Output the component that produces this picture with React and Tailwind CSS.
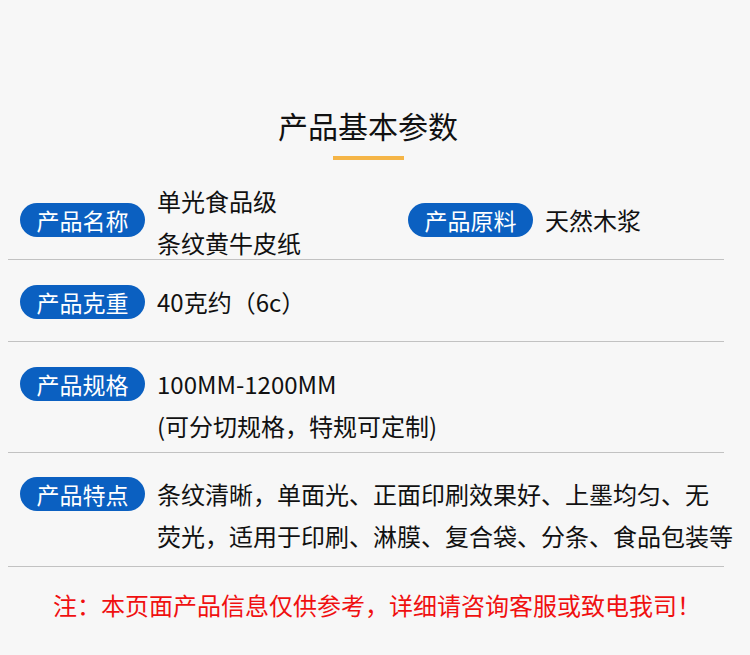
const font = { fontFamily: '"Noto Sans CJK SC", "Noto Sans", sans-serif' }

function Pill({ children, className = '' }) {
  return (
    <span
      className={`flex h-[34px] w-[125px] shrink-0 items-center justify-center rounded-full bg-[#0b60c1] text-[23px] leading-none text-white ${className}`}
    >
      {children}
    </span>
  )
}

function Divider() {
  return <div className="ml-[8px] h-px w-[716px] bg-[#c2c2c2]" />
}

export default function App() {
  return (
    <div className="h-[655px] w-[750px] bg-[#f7f7f7] text-[#111]" style={font}>
      <div className="flex w-[736px] flex-col items-center pt-[105px]">
        <h1 className="text-[30px] leading-[40px] font-normal">产品基本参数</h1>
        <div className="mt-[11px] h-[4px] w-[71px] bg-[#f5b547]" />
      </div>

      {/* 名称 / 原料 */}
      <div className="mt-[20px] flex h-[79px]">
        <div className="flex w-[408px] items-start pl-[20px]">
          <Pill className="mt-[23px]">产品名称</Pill>
          <div className="ml-[12px] text-[24px] leading-[42px]">
            <div>单光食品级</div>
            <div>条纹黄牛皮纸</div>
          </div>
        </div>
        <div className="flex items-start">
          <Pill className="mt-[23px]">产品原料</Pill>
          <div className="ml-[12px] mt-[19px] text-[24px] leading-[42px]">天然木浆</div>
        </div>
      </div>
      <Divider />

      {/* 克重 */}
      <div className="flex items-start pl-[20px] pt-[21px] pb-[18px]">
        <Pill className="mt-[4px]">产品克重</Pill>
        <div className="ml-[12px] text-[24px] leading-[42px]">40克约（6c）</div>
      </div>
      <Divider />

      {/* 规格 */}
      <div className="flex items-start pl-[20px] pt-[21px] pb-[5px]">
        <Pill className="mt-[4px]">产品规格</Pill>
        <div className="ml-[12px] text-[24px] leading-[42px]">
          <div>100MM-1200MM</div>
          <div>(可分切规格，特规可定制)</div>
        </div>
      </div>
      <Divider />

      {/* 特点 */}
      <div className="flex items-start pl-[20px] pt-[20px] pb-[9px]">
        <Pill className="mt-[4px]">产品特点</Pill>
        <div className="ml-[12px] text-[24px] leading-[42px]">
          <div>条纹清晰，单面光、正面印刷效果好、上墨均匀、无</div>
          <div className="whitespace-nowrap">荧光，适用于印刷、淋膜、复合袋、分条、食品包装等</div>
        </div>
      </div>
      <Divider />

      <p className="mt-[22px] pl-[53px] text-[24px] leading-[32px] text-[#f01010]">
        注：本页面产品信息仅供参考，详细请咨询客服或致电我司！
      </p>
    </div>
  )
}
